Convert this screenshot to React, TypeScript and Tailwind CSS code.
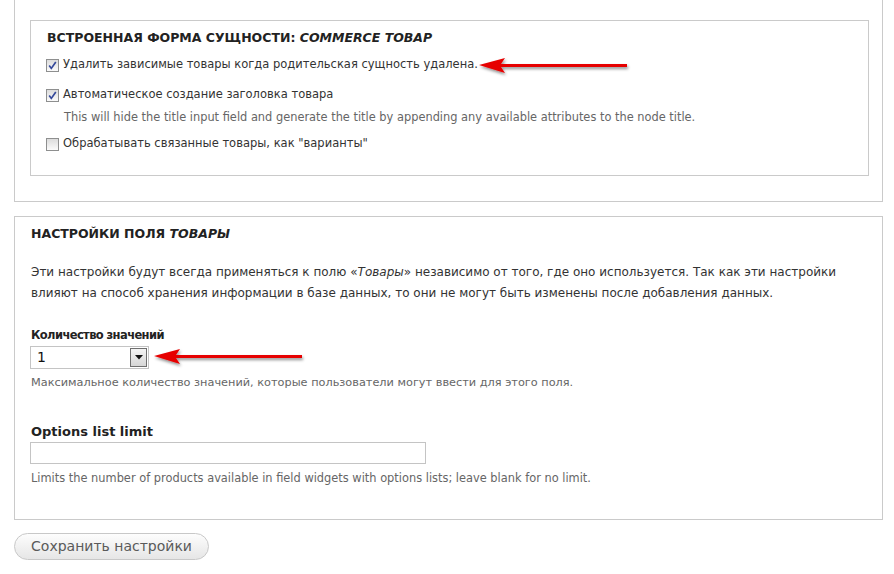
import React from 'react';

const Checkbox = ({ checked }: { checked?: boolean }) => (
  <span className="relative inline-block w-[13px] h-[13px] shrink-0 border border-[#8e8f8f] bg-gradient-to-b from-[#dcdcdc] to-[#fbfbfb]">
    {checked && (
      <svg viewBox="0 0 11 11" className="absolute inset-0 w-[11px] h-[11px]">
        <path d="M2.2 5.6 L4.3 8.4 L8.8 2" fill="none" stroke="#34489a" strokeWidth="1.7" />
      </svg>
    )}
  </span>
);

const RedArrow = ({ className }: { className: string }) => (
  <svg viewBox="0 0 160 22" className={`absolute w-[160px] h-[22px] ${className}`}>
    <defs>
      <filter id="sh" x="-10%" y="-50%" width="120%" height="200%">
        <feDropShadow dx="1" dy="2" stdDeviation="1.4" floodColor="#000" floodOpacity="0.45" />
      </filter>
    </defs>
    <g filter="url(#sh)">
      <path d="M2 9 L28 2 L24 8 L150 8 L150 11 L24 11 L28 17 Z" fill="#e60000" />
    </g>
  </svg>
);

export default function App() {
  return (
    <div className="w-[894px] h-[574px] bg-white text-[#333] font-['DejaVu_Sans',Verdana,sans-serif] overflow-hidden">
      {/* fieldset cut off at top */}
      <div className="ml-[14px] w-[869px] h-[202px] border-x border-b border-[#cacaca] pt-[20px] pl-[15px]">
        <div className="w-[839px] h-[156px] border border-[#cacaca] pl-[16px] pt-[7px]">
          <div className="h-[20px] leading-[20px] text-[12.5px] font-bold text-[#222] uppercase">
            Встроенная форма сущности: <em>Commerce товар</em>
          </div>
          <div className="relative mt-[7px] h-[20px] flex items-center gap-[4px] -ml-[1px] text-[11.5px]">
            <Checkbox checked />
            <span>Удалить зависимые товары когда родительская сущность удалена.</span>
            <RedArrow className="left-[431px] top-[1px]" />
          </div>
          <div className="mt-[10px] h-[20px] flex items-center gap-[4px] -ml-[1px] text-[11.5px]">
            <Checkbox checked />
            <span>Автоматическое создание заголовка товара</span>
          </div>
          <div className="mt-[3px] h-[18px] leading-[18px] pl-[17px] text-[11.4px] text-[#666]">
            This will hide the title input field and generate the title by appending any available attributes to the node title.
          </div>
          <div className="mt-[8px] h-[20px] flex items-center gap-[4px] -ml-[1px] text-[11.5px]">
            <Checkbox />
            <span>Обрабатывать связанные товары, как "варианты"</span>
          </div>
        </div>
      </div>

      <div className="ml-[14px] mt-[14px] w-[869px] h-[304px] border border-[#cacaca] pl-[16px] pt-[7px]">
        <div className="h-[20px] leading-[20px] text-[12.5px] font-bold text-[#222] uppercase">
          Настройки поля <em>Товары</em>
        </div>
        <p className="mt-[18px] text-[12px] leading-[21px] whitespace-nowrap">
          Эти настройки будут всегда применяться к полю «<em>Товары</em>» независимо от того, где оно используется. Так как эти настройки
          <br />
          влияют на способ хранения информации в базе данных, то они не могут быть изменены после добавления данных.
        </p>
        <div className="mt-[21px] h-[20px] leading-[20px] text-[11.5px] tracking-[-0.6px] font-bold text-[#222]">Количество значений</div>
        <div className="relative mt-[1px] -ml-[1px]">
          <div className="w-[119px] h-[23px] border border-[#c4c4c4] bg-white flex items-center justify-between pl-[6px] pr-[1px] text-[14px] text-[#111]">
            <span>1</span>
            <span className="w-[17px] h-[19px] border border-[#6f6f6f] bg-gradient-to-b from-[#f4f4f4] to-[#d6d6d6] flex items-center justify-center">
              <svg viewBox="0 0 8 5" className="w-[8px] h-[5px]">
                <path d="M0 0 L8 0 L4 4.5 Z" fill="#111" />
              </svg>
            </span>
          </div>
          <RedArrow className="left-[122px] top-[1px]" />
        </div>
        <div className="mt-[5px] h-[18px] leading-[18px] text-[11.3px] text-[#666]">
          Максимальное количество значений, которые пользователи могут ввести для этого поля.
        </div>
        <div className="mt-[30px] h-[20px] leading-[20px] text-[13px] font-bold text-[#222]">Options list limit</div>
        <div className="-ml-[1px] w-[396px] h-[22px] border border-[#c4c4c4] bg-white" />
        <div className="mt-[5px] h-[18px] leading-[18px] text-[11.4px] text-[#666]">
          Limits the number of products available in field widgets with options lists; leave blank for no limit.
        </div>
      </div>

      <div className="ml-[14px] mt-[13px]">
        <button className="w-[195px] h-[27px] rounded-full border border-[#c8c8c8] bg-gradient-to-b from-[#fdfdfd] to-[#e6e6e6] text-[14px] text-[#5a5a5a]">
          Сохранить настройки
        </button>
      </div>
    </div>
  );
}
